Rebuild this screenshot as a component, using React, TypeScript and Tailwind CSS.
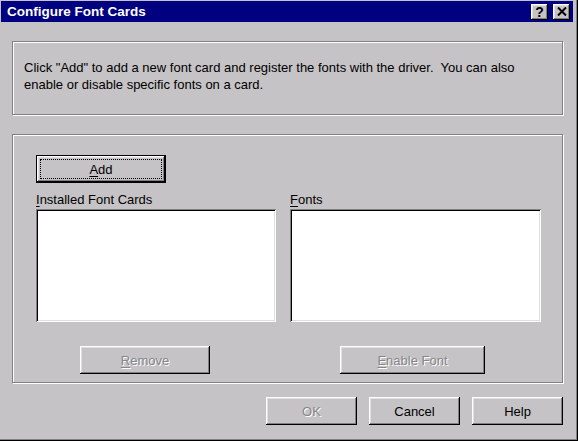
import React from "react";

const raised =
  "shadow-[inset_-1px_-1px_0_#000,inset_1px_1px_0_#fff,inset_-2px_-2px_0_#808080,inset_2px_2px_0_#dfdfdf]";
const sunken =
  "shadow-[inset_1px_1px_0_#808080,inset_-1px_-1px_0_#fff,inset_2px_2px_0_#000,inset_-2px_-2px_0_#dfdfdf]";
const etched = "border border-[#808080] shadow-[1px_1px_0_#fff,inset_1px_1px_0_#fff]";
const disabledText = "text-[#868686] [text-shadow:1px_1px_0_#fff]";

function Btn({
  children,
  w,
  disabled,
}: {
  children: React.ReactNode;
  w: string;
  disabled?: boolean;
}) {
  return (
    <div
      className={`${w} h-[28px] bg-[#c6c3c6] ${raised} flex items-center justify-center shrink-0 ${
        disabled ? disabledText : "text-black"
      }`}
    >
      {children}
    </div>
  );
}

function TitleBtn({ children }: { children: React.ReactNode }) {
  return (
    <div
      className={`w-[17px] h-[16px] bg-[#c6c3c6] ${raised} flex items-center justify-center`}
    >
      {children}
    </div>
  );
}

export default function App() {
  return (
    <div className="w-[578px] h-[441px] bg-[#c6c3c6] flex flex-col pl-px pt-px pr-[5px] pb-[3px] shadow-[inset_-1px_-1px_0_#000,inset_-2px_-2px_0_#808080] font-['Liberation_Sans',Arial,sans-serif] text-[13px] leading-[15px] text-black overflow-hidden">
      <div className="h-[21px] bg-[#000080] flex items-center pl-[6px] pr-[3px] shrink-0">
        <span className="text-white font-bold text-[13.5px] leading-[16px]">
          Configure Font Cards
        </span>
        <div className="ml-auto flex gap-[5px]">
          <TitleBtn>
            <span className="font-bold text-[14px] leading-[14px] text-black">?</span>
          </TitleBtn>
          <TitleBtn>
            <svg width="10" height="9" viewBox="0 0 10 9">
              <path d="M1 0.5 L9 8.5 M9 0.5 L1 8.5" stroke="#000" strokeWidth="2" />
            </svg>
          </TitleBtn>
        </div>
      </div>

      <div className={`ml-[11px] mr-[10px] mt-[19px] h-[74px] ${etched} pl-[11px] pt-[17px] leading-[17px] shrink-0`}>
        <div className="whitespace-pre">
          {'Click "Add" to add a new font card and register the fonts with the driver.  You can also'}
        </div>
        <div>enable or disable specific fonts on a card.</div>
      </div>

      <div className={`ml-[11px] mr-[10px] mt-[19px] h-[249px] ${etched} pl-[23px] pt-[20px] flex flex-col shrink-0`}>
        <div className="w-[130px] h-[28px] border border-black flex shrink-0">
          <div className={`flex-1 ${raised} p-[3px] flex`}>
            <div className="flex-1 border border-dotted border-black flex items-center justify-center">
              <span>
                <u className="underline-offset-2">A</u>dd
              </span>
            </div>
          </div>
        </div>

        <div className="flex gap-[14px] mt-[9px]">
          <div className="w-[240px] flex flex-col">
            <div className="h-[15px]">
              <u className="underline-offset-2">I</u>nstalled Font Cards
            </div>
            <div className={`mt-[2px] h-[113px] bg-white ${sunken}`} />
          </div>
          <div className="w-[251px] flex flex-col">
            <div className="h-[15px]">
              <u className="underline-offset-2">F</u>onts
            </div>
            <div className={`mt-[2px] h-[113px] bg-white ${sunken}`} />
          </div>
        </div>

        <div className="flex mt-[24px]">
          <div className="ml-[44px]">
            <Btn w="w-[130px]" disabled>
              <span>
                <u className="underline-offset-2">R</u>emove
              </span>
            </Btn>
          </div>
          <div className="ml-[130px]">
            <Btn w="w-[145px]" disabled>
              <span>
                <u className="underline-offset-2">E</u>nable Font
              </span>
            </Btn>
          </div>
        </div>
      </div>

      <div className="flex justify-end gap-[12px] mr-[10px] mt-[14px]">
        <Btn w="w-[91px]" disabled>
          OK
        </Btn>
        <Btn w="w-[91px]">Cancel</Btn>
        <Btn w="w-[91px]">Help</Btn>
      </div>
    </div>
  );
}
